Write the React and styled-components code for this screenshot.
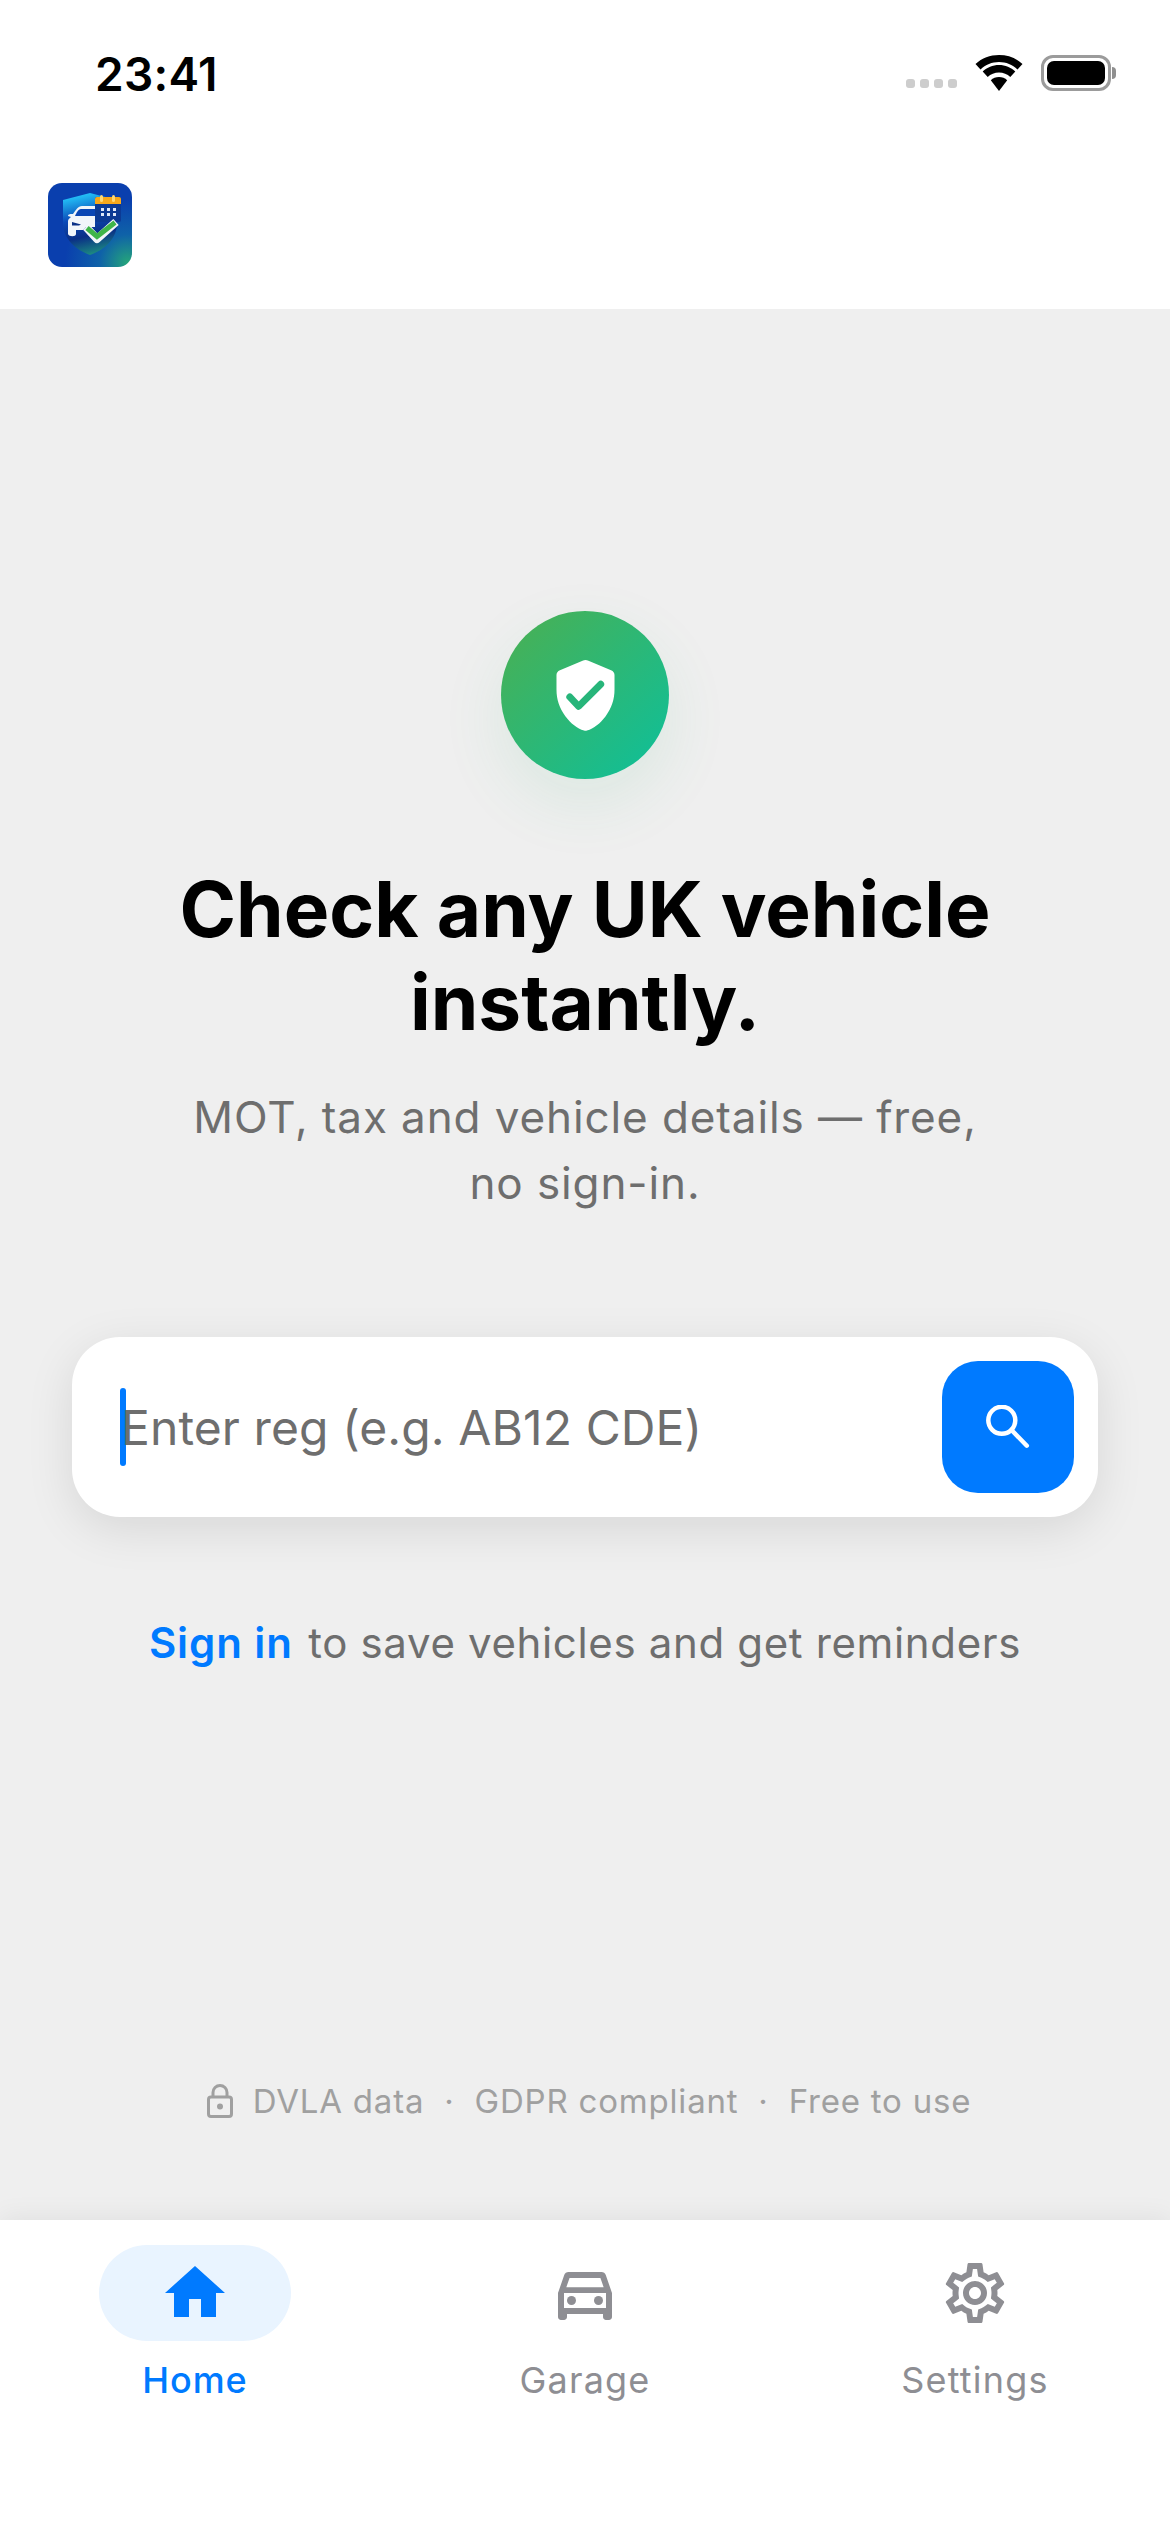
import React from "react";
import styled, { createGlobalStyle } from "styled-components";
import { MdHome, MdOutlineDirectionsCar, MdOutlineSettings } from "react-icons/md";

const GlobalStyle = createGlobalStyle`
  html, body {
    margin: 0;
    padding: 0;
    background: #fff;
    font-family: Inter, "Liberation Sans", sans-serif;
  }
  * { box-sizing: border-box; }
`;

const Screen = styled.div`
  width: 1170px;
  height: 2532px;
  display: flex;
  flex-direction: column;
  overflow: hidden;
  background: #efefef;
`;

const Header = styled.header`
  height: 309px;
  background: #fff;
  display: flex;
  flex-direction: column;
`;

const StatusBar = styled.div`
  height: 183px;
  padding: 47px 54px 0 95px;
  display: flex;
  justify-content: space-between;
  align-items: flex-start;
`;

const Time = styled.span`
  font-size: 46px;
  line-height: 54px;
  font-weight: 600;
  letter-spacing: 0.3px;
  color: #000;
`;

const StatusIcons = styled.div`
  display: flex;
  align-items: center;
  gap: 18px;
  padding-top: 8px;
`;

const Dots = styled.div`
  display: flex;
  gap: 5px;
  margin-top: 20px;
`;

const Dot = styled.i`
  width: 9px;
  height: 9px;
  border-radius: 3px;
  background: #cdcdcd;
`;

const LogoWrap = styled.div`
  padding-left: 48px;
  height: 84px;
`;

const Main = styled.main`
  flex: 1;
  display: flex;
  flex-direction: column;
  align-items: center;
  padding-top: 302px;
`;

const Badge = styled.div`
  width: 168px;
  height: 168px;
  border-radius: 50%;
  background: linear-gradient(135deg, #4caf50, #0cc09c);
  box-shadow: 0 24px 64px rgba(52, 178, 110, 0.1);
  display: flex;
  align-items: center;
  justify-content: center;
`;

const Title = styled.h1`
  margin: 84px 0 0;
  width: 1000px;
  text-align: center;
  font-size: 76.5px;
  line-height: 93px;
  font-weight: 700;
  color: #000;
`;

const Subtitle = styled.p`
  margin: 35px 0 0;
  width: 1000px;
  text-align: center;
  font-size: 44px;
  line-height: 66px;
  letter-spacing: 0.9px;
  color: #6e6e6e;
`;

const SearchCard = styled.div`
  margin-top: 121px;
  width: 1026px;
  height: 180px;
  background: #fff;
  border-radius: 48px;
  box-shadow: 0 12px 48px rgba(0, 0, 0, 0.1);
  padding: 0 24px 0 48px;
  display: flex;
  align-items: center;
  justify-content: space-between;
`;

const Field = styled.div`
  display: flex;
  align-items: center;
`;

const Caret = styled.span`
  width: 6px;
  height: 78px;
  border-radius: 3px;
  background: #007aff;
`;

const Placeholder = styled.span`
  margin: 2px 0 0 -5px;
  font-size: 48px;
  line-height: 60px;
  letter-spacing: 0.1px;
  color: #6e6e6e;
`;

const SearchButton = styled.button`
  width: 132px;
  height: 132px;
  border: none;
  border-radius: 36px;
  background: #007aff;
  display: flex;
  align-items: center;
  justify-content: center;
  padding: 0;
`;

const SignInRow = styled.p`
  margin: 99px 0 0;
  font-size: 42px;
  line-height: 54px;
  letter-spacing: 0.65px;
  color: #6e6e6e;
`;

const SignIn = styled.span`
  margin-right: 3px;
  color: #007aff;
  font-weight: 600;
  letter-spacing: 0.9px;
`;

const Trust = styled.div`
  margin: auto 0 99px 8px;
  display: flex;
  align-items: center;
  gap: 16px;
  font-size: 33px;
  line-height: 40px;
  letter-spacing: 0.8px;
  color: #a0a0a0;
`;

const LockSlot = styled.span`
  display: flex;
  margin-right: 4px;
`;

const Sep = styled.span`
  margin: 0 4px;
`;

const Nav = styled.nav`
  height: 312px;
  background: #fff;
  box-shadow: 0 -4px 24px rgba(0, 0, 0, 0.06);
  display: grid;
  grid-template-columns: repeat(3, 1fr);
  padding: 25px 0 0;
  position: relative;
`;

const Tab = styled.div`
  display: flex;
  flex-direction: column;
  align-items: center;
  color: ${({ $active }) => ($active ? "#007aff" : "#8e8e93")};
`;

const IconPill = styled.div`
  width: 192px;
  height: 96px;
  border-radius: 48px;
  background: ${({ $active }) => ($active ? "#e9f4ff" : "transparent")};
  display: flex;
  align-items: center;
  justify-content: center;
`;

const TabLabel = styled.span`
  margin-top: 18px;
  font-size: 36px;
  line-height: 42px;
  letter-spacing: ${({ $active }) => ($active ? "0.9px" : "1.2px")};
  font-weight: ${({ $active }) => ($active ? 500 : 400)};
`;

const Wifi = () => (
  <svg width="48" height="36" viewBox="0 0 48 36">
    <path d="M24 6c7 0 13.500 2.700 18.500 7.500L47.500 8C41 2 33 -1 24 -1S7 2 .5 8l5 5.500C10.500 8.700 17 6 24 6z" transform="translate(0 1)" />
    <path d="M24 16.500c4.300 0 8.300 1.600 11.300 4.500l5-5.500C36 11.400 30.300 9 24 9S12 11.400 7.700 15.500l5 5.500c3-2.900 7-4.500 11.300-4.500z" transform="translate(0 1)" />
    <path d="M24 22c-3.200 0-6 1.200-8.200 3.200L24 36l8.200-10.800C30 23.200 27.200 22 24 22z" />
  </svg>
);

const BatteryBody = styled.div`
  width: 70px;
  height: 36px;
  border: 3px solid #9b9b9b;
  border-radius: 12px;
  padding: 3px;
  display: flex;
`;

const BatteryFill = styled.div`
  flex: 1;
  background: #000;
  border-radius: 7px;
`;

const BatteryCap = styled.div`
  width: 4px;
  height: 12px;
  background: #8f8f8f;
  border-radius: 0 4px 4px 0;
  margin-left: 1px;
`;

const Battery = styled.div`
  display: flex;
  align-items: center;
`;

const Logo = () => (
  <svg width="84" height="84" viewBox="0 0 84 84">
    <defs>
      <radialGradient id="logoBg" cx="0.95" cy="0.95" r="0.75">
        <stop offset="0" stopColor="#25a57a" />
        <stop offset="0.45" stopColor="#0f62a8" />
        <stop offset="1" stopColor="#0a3fae" />
      </radialGradient>
      <linearGradient id="logoShield" x1="0.55" y1="0" x2="0.75" y2="1">
        <stop offset="0" stopColor="#22bdf5" />
        <stop offset="0.35" stopColor="#0b49b8" />
        <stop offset="0.65" stopColor="#0a2f86" />
        <stop offset="1" stopColor="#1f9a80" />
      </linearGradient>
    </defs>
    <rect width="84" height="84" rx="14" fill="url(#logoBg)" />
    <path d="M42 10 L15 17 V40 C15 56 28 67 42 72 C56 67 69 56 69 40 V17 Z" fill="url(#logoShield)" />
    <path d="M34 23 H47 V44 H38 L35 47 H28 V51 C28 54 21 54 20 51 V38 C20 36 22 35 23 34 L20 33 C20 31 23 31 25 31 C28 27 30 23 34 23Z" fill="#f2f5fa" />
    <path d="M33 26 H47 V33 H27 C28.500 30 30 26 33 26Z" fill="#0b46b4" />
    <path d="M24 39 L33 41.500 L31 42.500 H24Z" fill="#0a2f86" />
    <rect x="47" y="14" width="26" height="25" rx="2" fill="#0c3a94" />
    <path d="M47 21 V16 a2 2 0 0 1 2 -2 H71 a2 2 0 0 1 2 2 V21 Z" fill="#f7a81b" />
    <rect x="52" y="12" width="3" height="7" rx="1.500" fill="#ffd872" />
    <rect x="64" y="12" width="3" height="7" rx="1.500" fill="#ffd872" />
    <g fill="#dfe8f8">
      <rect x="53" y="25" width="3" height="3" />
      <rect x="59" y="25" width="3" height="3" />
      <rect x="65" y="25" width="3" height="3" />
      <rect x="53" y="30" width="3" height="3" />
      <rect x="59" y="30" width="3" height="3" />
      <rect x="65" y="30" width="3" height="3" />
    </g>
    <path d="M38 44 L49 56 L68 39" fill="none" stroke="#f2f5fa" strokeWidth="8" strokeLinejoin="round" />
    <path d="M39 45 L49 53.500 L67 39.500" fill="none" stroke="#3fb549" strokeWidth="5" />
  </svg>
);

const ShieldCheck = () => (
  <svg width="59" height="71" viewBox="0 0 60 72">
    <path
      d="M30 0c1 0 2 .2 3 .6l23 9.600c2.300 1 3.500 2.700 3.500 5V30c0 10-3 19-9 27-5.500 7.300-12 12.500-19 14.500-1 .3-2 .3-3 0-7-2-13.500-7.200-19-14.500-6-8-9-17-9-27V15.200c0-2.300 1.200-4 3.500-5L27 .6C28 .2 29 0 30 0z"
      fill="#fff"
    />
    <path d="M14 37.500 L23 47 L45.500 24.500" fill="none" stroke="#27b57a" strokeWidth="7" strokeLinecap="round" strokeLinejoin="round" />
  </svg>
);

const SearchGlyph = () => (
  <svg width="44" height="44" viewBox="0 0 44 44" fill="none" stroke="#fff" strokeWidth="4.500" strokeLinecap="round">
    <circle cx="15.800" cy="15.300" r="13.500" />
    <path d="M25.500 25 L40.800 40.700" />
  </svg>
);

const Lock = () => (
  <svg width="26" height="34" viewBox="0 0 26 34" fill="none" stroke="#a0a0a0" strokeWidth="3">
    <rect x="1.500" y="13" width="23" height="19.500" rx="2.500" />
    <path d="M6 13 V8.500 a7 7 0 0 1 14 0 V13" />
    <circle cx="13" cy="22.500" r="3" fill="#a0a0a0" stroke="none" />
  </svg>
);

export default function App() {
  return (
    <Screen>
      <GlobalStyle />
      <Header>
        <StatusBar>
          <Time>23:41</Time>
          <StatusIcons>
            <Dots>
              <Dot />
              <Dot />
              <Dot />
              <Dot />
            </Dots>
            <Wifi />
            <Battery>
              <BatteryBody>
                <BatteryFill />
              </BatteryBody>
              <BatteryCap />
            </Battery>
          </StatusIcons>
        </StatusBar>
        <LogoWrap>
          <Logo />
        </LogoWrap>
      </Header>
      <Main>
        <Badge>
          <ShieldCheck />
        </Badge>
        <Title>
          Check any UK vehicle
          <br />
          instantly.
        </Title>
        <Subtitle>
          MOT, tax and vehicle details — free,
          <br />
          no sign-in.
        </Subtitle>
        <SearchCard>
          <Field>
            <Caret />
            <Placeholder>Enter reg (e.g. AB12 CDE)</Placeholder>
          </Field>
          <SearchButton>
            <SearchGlyph />
          </SearchButton>
        </SearchCard>
        <SignInRow>
          <SignIn>Sign in</SignIn> to save vehicles and get reminders
        </SignInRow>
        <Trust>
          <LockSlot>
            <Lock />
          </LockSlot>
          <span>DVLA data</span>
          <Sep>·</Sep>
          <span>GDPR compliant</span>
          <Sep>·</Sep>
          <span>Free to use</span>
        </Trust>
      </Main>
      <Nav>
        <Tab $active>
          <IconPill $active>
            <MdHome size={72} />
          </IconPill>
          <TabLabel $active>Home</TabLabel>
        </Tab>
        <Tab>
          <IconPill>
            <MdOutlineDirectionsCar size={72} />
          </IconPill>
          <TabLabel>Garage</TabLabel>
        </Tab>
        <Tab>
          <IconPill>
            <MdOutlineSettings size={72} />
          </IconPill>
          <TabLabel>Settings</TabLabel>
        </Tab>
      </Nav>
    </Screen>
  );
}
